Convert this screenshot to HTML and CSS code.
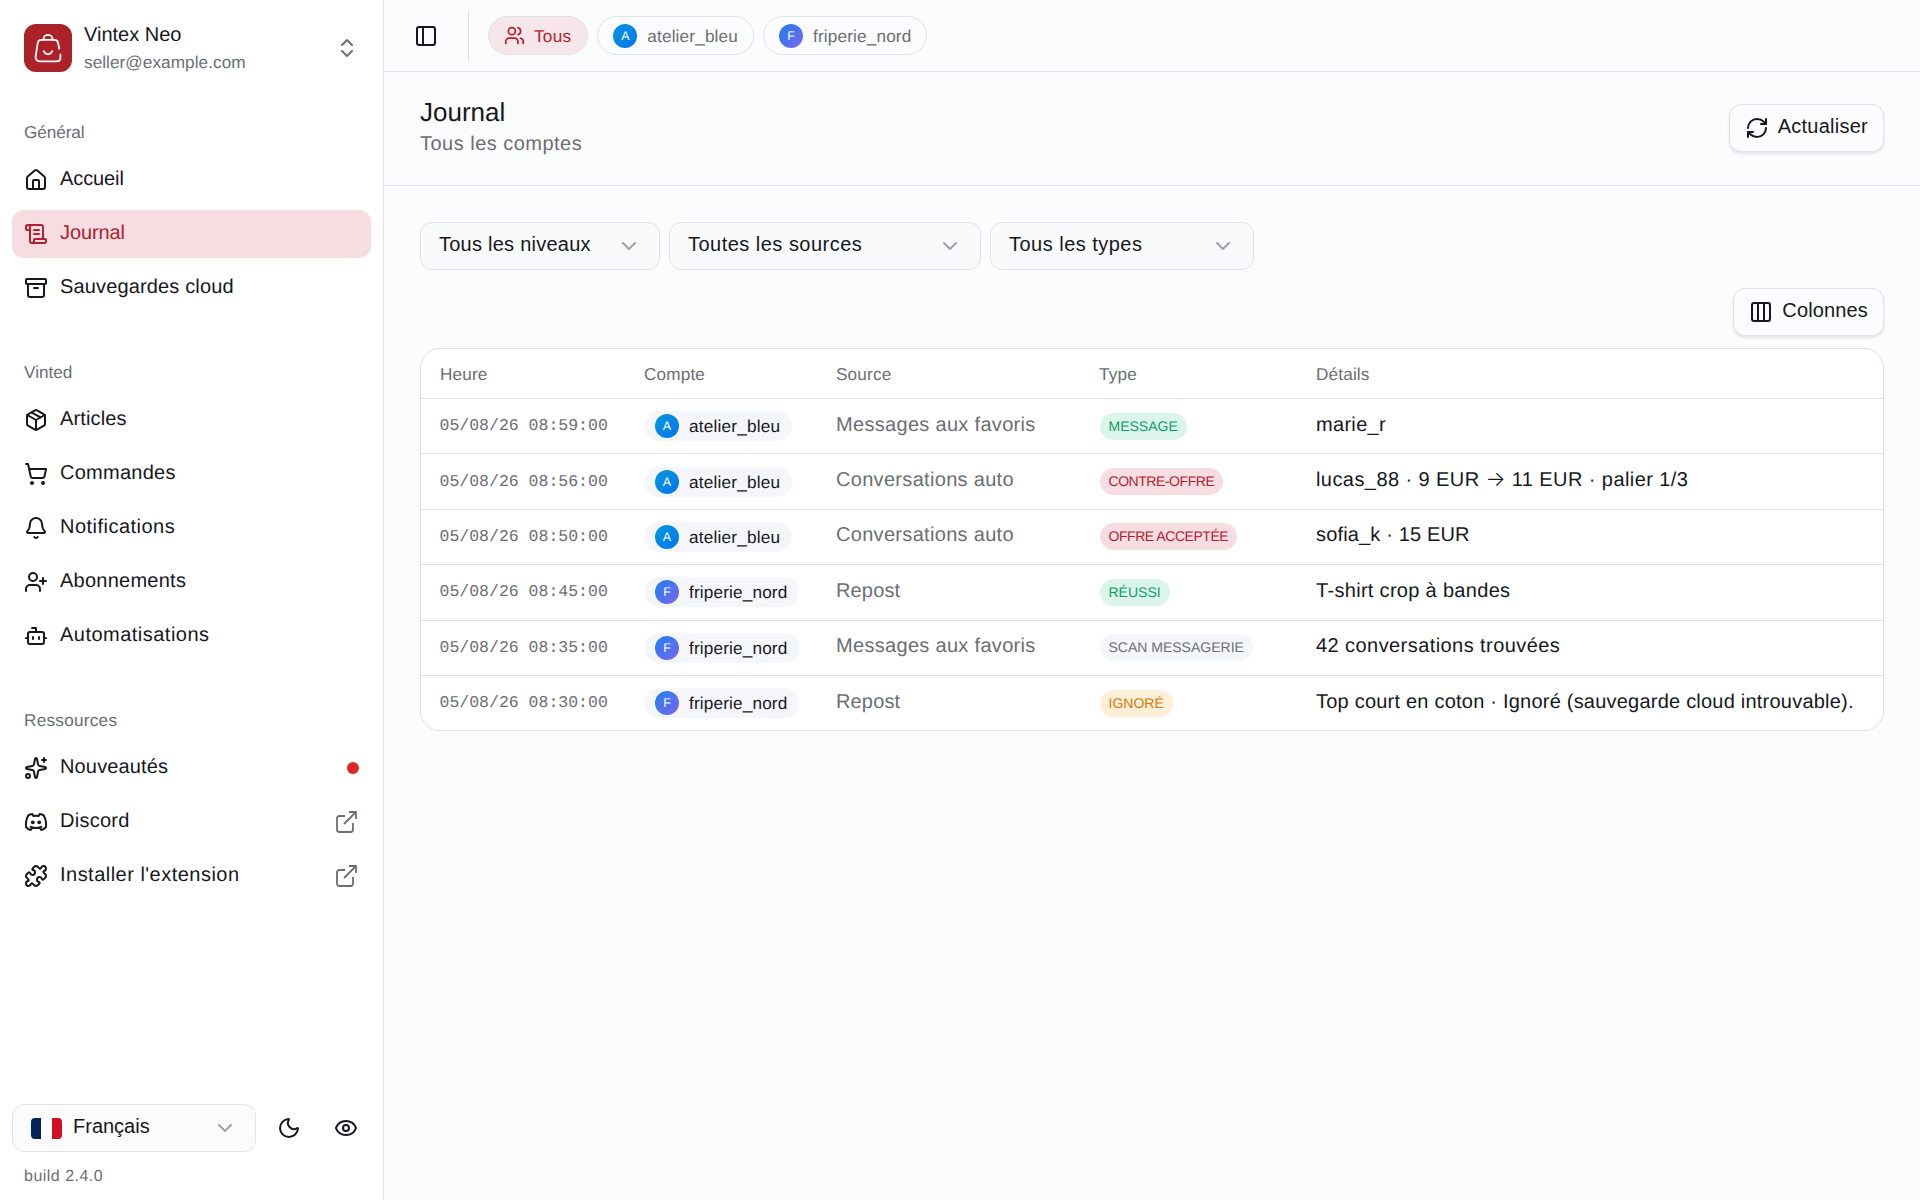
FILE: index.html
```
<!DOCTYPE html>
<html lang="fr">
<head>
<meta charset="utf-8">
<title>Journal – Vintex Neo</title>
<link rel="stylesheet" href="styles.css">
</head>
<body>
<svg class="defs" width="0" height="0" aria-hidden="true">
  <symbol id="chevron" viewBox="0 0 24 24"><path d="m6 9 6 6 6-6"/></symbol>
  <symbol id="external" viewBox="0 0 24 24"><path d="M15 2h7v7"/><path d="M10 14 21.500 2.500"/><path d="M19 13v6.500a2.500 2.500 0 0 1-2.500 2.500h-11A2.500 2.500 0 0 1 3 19.500v-11A2.500 2.500 0 0 1 5.500 6H11"/></symbol>
</svg>
<div class="app">
  <aside class="sidebar">
    <header class="account">
      <span class="logo"><svg viewBox="0 0 48 48"><path d="M19.400 15.800c0-2.900 2-5 4.600-5s4.600 2.100 4.600 5"/><path d="M35.300 24.700 34 18.800a3.500 3.500 0 0 0-3.500-3H17.300a3.500 3.500 0 0 0-3.500 2.900l-2.200 14a4 4 0 0 0 4 4.600h16.800c2.600 0 4-1.500 4-3.600v-3.200"/><path d="M19.700 27.200c1.100 2.100 2.500 3.100 4.300 3.100s3.200-1 4.300-3.100"/></svg></span>
      <span class="who"><span class="name s2">Vintex Neo</span><span class="mail s3">seller@example.com</span></span>
      <svg class="icon muted" viewBox="0 0 24 24"><path d="m7 15 5 5 5-5"/><path d="m7 9 5-5 5 5"/></svg>
    </header>
    <nav class="nav">
      <section class="group">
        <h2 class="s1">Général</h2>
        <a class="item s1"><svg class="icon" viewBox="0 0 24 24"><path d="M15 21v-8a1 1 0 0 0-1-1h-4a1 1 0 0 0-1 1v8"/><path d="M3 10a2 2 0 0 1 .709-1.528l7-5.999a2 2 0 0 1 2.582 0l7 5.999A2 2 0 0 1 21 10v9a2 2 0 0 1-2 2H5a2 2 0 0 1-2-2z"/></svg><span>Accueil</span></a>
        <a class="item active s1"><svg class="icon" viewBox="0 0 24 24"><path d="M15 12h-5"/><path d="M15 8h-5"/><path d="M19 17V5a2 2 0 0 0-2-2H4"/><path d="M8 21h12a2 2 0 0 0 2-2v-1a1 1 0 0 0-1-1H11a1 1 0 0 0-1 1v1a2 2 0 1 1-4 0V5a2 2 0 1 0-4 0v2a1 1 0 0 0 1 1h3"/></svg><span>Journal</span></a>
        <a class="item s3"><svg class="icon" viewBox="0 0 24 24"><rect width="20" height="5" x="2" y="3" rx="1"/><path d="M4 8v11a2 2 0 0 0 2 2h12a2 2 0 0 0 2-2V8"/><path d="M10 12h4"/></svg><span>Sauvegardes cloud</span></a>
      </section>
      <section class="group">
        <h2 class="s2">Vinted</h2>
        <a class="item s3"><svg class="icon" viewBox="0 0 24 24"><path d="M11 21.730a2 2 0 0 0 2 0l7-4A2 2 0 0 0 21 16V8a2 2 0 0 0-1-1.730l-7-4a2 2 0 0 0-2 0l-7 4A2 2 0 0 0 3 8v8a2 2 0 0 0 1 1.730z"/><path d="M12 22V12"/><path d="M3.290 7 12 12l8.710-5"/><path d="m7.500 4.270 9 5.150"/></svg><span>Articles</span></a>
        <a class="item s4"><svg class="icon" viewBox="0 0 24 24"><circle cx="8" cy="21" r="1"/><circle cx="19" cy="21" r="1"/><path d="M2.050 2.050h2l2.660 12.420a2 2 0 0 0 2 1.580h9.780a2 2 0 0 0 1.950-1.570l1.650-7.430H5.120"/></svg><span>Commandes</span></a>
        <a class="item s6"><svg class="icon" viewBox="0 0 24 24"><path d="M10.268 21a2 2 0 0 0 3.464 0"/><path d="M3.262 15.326A1 1 0 0 0 4 17h16a1 1 0 0 0 .74-1.673C19.410 13.956 18 12.499 18 8A6 6 0 0 0 6 8c0 4.499-1.411 5.956-2.738 7.326"/></svg><span>Notifications</span></a>
        <a class="item s4"><svg class="icon" viewBox="0 0 24 24"><path d="M16 21v-2a4 4 0 0 0-4-4H6a4 4 0 0 0-4 4v2"/><circle cx="9" cy="7" r="4"/><path d="M19 8v6"/><path d="M22 11h-6"/></svg><span>Abonnements</span></a>
        <a class="item s6"><svg class="icon" viewBox="0 0 24 24"><path d="M12 8V4H8"/><rect width="16" height="12" x="4" y="8" rx="2"/><path d="M2 14h2"/><path d="M20 14h2"/><path d="M15 13v2"/><path d="M9 13v2"/></svg><span>Automatisations</span></a>
      </section>
      <section class="group">
        <h2 class="s4">Ressources</h2>
        <a class="item s3"><svg class="icon" viewBox="0 0 24 24"><path d="M11.017 2.814a1 1 0 0 1 1.966 0l1.051 5.558a2 2 0 0 0 1.594 1.594l5.558 1.051a1 1 0 0 1 0 1.966l-5.558 1.051a2 2 0 0 0-1.594 1.594l-1.051 5.558a1 1 0 0 1-1.966 0l-1.051-5.558a2 2 0 0 0-1.594-1.594l-5.558-1.051a1 1 0 0 1 0-1.966l5.558-1.051a2 2 0 0 0 1.594-1.594z"/><path d="M20 2v4"/><path d="M22 4h-4"/><circle cx="4" cy="20" r="2"/></svg><span>Nouveautés</span><i class="dot"></i></a>
        <a class="item s4"><svg class="icon" viewBox="0 0 24 24"><path d="M8.300 4.100 9.400 6q2.600-.5 5.200 0l1.100-1.900c1.500.2 2.900.6 4 1.300 1.900 3.400 2.800 7.100 2.300 11.600a10 10 0 0 1-4.700 3.100L15.900 17.700q-3.900.8-7.800 0L6.700 20.100A10 10 0 0 1 2 17c-.5-4.500.4-8.200 2.300-11.600 1.100-.7 2.500-1.100 4-1.300z"/><path d="M6.700 16.800q5.300 2.200 10.600 0"/><circle class="fill" cx="8.800" cy="12.300" r="1.900"/><circle class="fill" cx="15.200" cy="12.300" r="1.900"/></svg><span>Discord</span><svg class="icon end" viewBox="0 0 24 24"><use href="#external"/></svg></a>
        <a class="item s6"><svg class="icon" viewBox="0 0 24 24"><path d="M15.390 4.390a1 1 0 0 0 1.680-.474 2.500 2.500 0 1 1 3.014 3.015 1 1 0 0 0-.474 1.680l1.683 1.682a2.414 2.414 0 0 1 0 3.414L19.610 15.390a1 1 0 0 1-1.680-.474 2.500 2.500 0 1 0-3.014 3.015 1 1 0 0 1 .474 1.680l-1.683 1.682a2.414 2.414 0 0 1-3.414 0L8.610 19.610a1 1 0 0 0-1.680.474 2.500 2.500 0 1 1-3.014-3.015 1 1 0 0 0 .474-1.680l-1.683-1.682a2.414 2.414 0 0 1 0-3.414L4.390 8.610a1 1 0 0 1 1.680.474 2.500 2.500 0 1 0 3.014-3.015 1 1 0 0 1-.474-1.680l1.683-1.682a2.414 2.414 0 0 1 3.414 0z"/></svg><span>Installer l'extension</span><svg class="icon end" viewBox="0 0 24 24"><use href="#external"/></svg></a>
      </section>
    </nav>
    <footer class="foot">
      <div class="tools">
        <button class="select lang s2"><i class="flag"></i><span>Français</span><svg class="icon chev" viewBox="0 0 24 24"><use href="#chevron"/></svg></button>
        <button class="tool"><svg class="icon" viewBox="0 0 24 24"><path d="M20.985 12.486a9 9 0 1 1-9.473-9.472c.405-.022.617.46.402.803a6 6 0 0 0 8.268 8.268c.344-.215.825-.004.803.401"/></svg></button>
        <button class="tool"><svg class="icon" viewBox="0 0 24 24"><path d="M2.062 12.348a1 1 0 0 1 0-.696 10.750 10.750 0 0 1 19.876 0 1 1 0 0 1 0 .696 10.750 10.750 0 0 1-19.876 0"/><circle cx="12" cy="12" r="3"/></svg></button>
      </div>
      <p class="build s6">build 2.4.0</p>
    </footer>
  </aside>

  <main class="main">
    <div class="topbar">
      <svg class="icon" viewBox="0 0 24 24"><rect width="18" height="18" x="3" y="3" rx="2"/><path d="M9 3v18"/></svg>
      <i class="sep"></i>
      <div class="pills">
        <span class="pill on s4"><svg class="icon small" viewBox="0 0 24 24"><path d="M16 21v-2a4 4 0 0 0-4-4H6a4 4 0 0 0-4 4v2"/><path d="M16 3.128a4 4 0 0 1 0 7.744"/><path d="M22 21v-2a4 4 0 0 0-3-3.870"/><circle cx="9" cy="7" r="4"/></svg>Tous</span>
        <span class="pill s3"><i class="avatar a">A</i>atelier_bleu</span>
        <span class="pill s3"><i class="avatar f">F</i>friperie_nord</span>
      </div>
    </div>
    <header class="head">
      <div><h1 class="s2">Journal</h1><p class="s6">Tous les comptes</p></div>
      <button class="btn s4"><svg class="icon" viewBox="0 0 24 24"><path d="M3 12a9 9 0 0 1 9-9 9.750 9.750 0 0 1 6.740 2.740L21 8"/><path d="M21 3v5h-5"/><path d="M21 12a9 9 0 0 1-9 9 9.750 9.750 0 0 1-6.740-2.740L3 16"/><path d="M8 16H3v5"/></svg><span>Actualiser</span></button>
    </header>
    <div class="content">
      <div class="filters">
        <button class="select levels s4"><span>Tous les niveaux</span><svg class="icon chev" viewBox="0 0 24 24"><use href="#chevron"/></svg></button>
        <button class="select sources s6"><span>Toutes les sources</span><svg class="icon chev" viewBox="0 0 24 24"><use href="#chevron"/></svg></button>
        <button class="select types s6"><span>Tous les types</span><svg class="icon chev" viewBox="0 0 24 24"><use href="#chevron"/></svg></button>
      </div>
      <div class="actions">
        <button class="btn s3"><svg class="icon" viewBox="0 0 24 24"><rect width="18" height="18" x="3" y="3" rx="2"/><path d="M9 3v18"/><path d="M15 3v18"/></svg><span>Colonnes</span></button>
      </div>
      <div class="table">
        <div class="row th s3"><span>Heure</span><span>Compte</span><span>Source</span><span>Type</span><span>Détails</span></div>
        <div class="row"><time>05/08/26 08:59:00</time><span><span class="chip s4"><i class="avatar a">A</i>atelier_bleu</span></span><span class="src">Messages aux favoris</span><span><b class="badge green">MESSAGE</b></span><span class="det">marie_r</span></div>
        <div class="row"><time>05/08/26 08:56:00</time><span><span class="chip s4"><i class="avatar a">A</i>atelier_bleu</span></span><span class="src">Conversations auto</span><span><b class="badge red">CONTRE-OFFRE</b></span><span class="det s6">lucas_88 · 9 EUR <span class="arrow">→</span> 11 EUR · palier 1/3</span></div>
        <div class="row"><time>05/08/26 08:50:00</time><span><span class="chip s4"><i class="avatar a">A</i>atelier_bleu</span></span><span class="src">Conversations auto</span><span><b class="badge red">OFFRE ACCEPTÉE</b></span><span class="det s3">sofia_k · 15 EUR</span></div>
        <div class="row"><time>05/08/26 08:45:00</time><span><span class="chip s3"><i class="avatar f">F</i>friperie_nord</span></span><span class="src s3">Repost</span><span><b class="badge green">RÉUSSI</b></span><span class="det">T-shirt crop à bandes</span></div>
        <div class="row"><time>05/08/26 08:35:00</time><span><span class="chip s3"><i class="avatar f">F</i>friperie_nord</span></span><span class="src">Messages aux favoris</span><span><b class="badge gray">SCAN MESSAGERIE</b></span><span class="det s6">42 conversations trouvées</span></div>
        <div class="row"><time>05/08/26 08:30:00</time><span><span class="chip s3"><i class="avatar f">F</i>friperie_nord</span></span><span class="src s3">Repost</span><span><b class="badge amber">IGNORÉ</b></span><span class="det s4">Top court en coton · Ignoré (sauvegarde cloud introuvable).</span></div>
      </div>
    </div>
  </main>
</div>
</body>
</html>
```
FILE: styles.css
```
* { box-sizing: border-box; margin: 0; padding: 0; }
body {
  font: 20px/24px "Liberation Sans", Arial, sans-serif;
  color: #16181d;
  background: #fbfcfe;
  text-rendering: geometricPrecision;
}
button { font: inherit; color: inherit; letter-spacing: inherit; border: 0; background: none; }
h1, h2, b, i { font-weight: 400; font-style: normal; }
.defs { position: absolute; }

/* Tracking steps */
.s1 { letter-spacing: -.1px; }
.s2 { letter-spacing: 0; }
.s3 { letter-spacing: .15px; }
.s4 { letter-spacing: .25px; }
.s6 { letter-spacing: .48px; }

.icon { width: 24px; height: 24px; flex: none; fill: none; stroke: currentColor; stroke-width: 2; stroke-linecap: round; stroke-linejoin: round; }
.icon .fill { fill: currentColor; stroke: none; }
.muted { color: #6b6e73; }

.app { display: flex; height: 1200px; }
.sidebar { width: 384px; flex: none; display: flex; flex-direction: column; background: #fff; border-right: 1px solid #e0e2e5; }

.account { display: flex; align-items: center; height: 96px; padding: 0 24px; }
.logo { width: 48px; height: 48px; border-radius: 12px; background: #ad2129; }
.logo svg { display: block; fill: none; stroke: #fff; stroke-width: 1.8; stroke-linecap: round; }
.who { flex: 1; padding-left: 12px; display: flex; flex-direction: column; padding-top: 1px; }
.name { line-height: 28px; }
.mail { font-size: 17.2px; line-height: 27px; letter-spacing: .05px; color: #6b6e73; }

.nav { flex: 1; padding: 12px; display: flex; flex-direction: column; gap: 36px; }
.group { display: flex; flex-direction: column; gap: 6px; }
.group h2 { font-size: 17.2px; height: 42px; line-height: 49px; padding-left: 12px; color: #6b6e73; }
.item { display: flex; align-items: center; gap: 12px; height: 48px; padding: 0 12px; border-radius: 12px; }
.item span { padding-bottom: 2px; flex: 1; }
.active { background: #f5dde1; color: #b3202f; }
.dot { width: 12px; height: 12px; border-radius: 50%; background: #e02424; }
.end { color: #6b6e73; stroke-width: 1.8; stroke-linecap: butt; margin-right: 1px; }

.foot { padding: 0 12px; height: 96px; }
.tools { display: flex; align-items: center; }
.select { display: flex; align-items: center; height: 48px; padding: 0 18px; border: 1px solid #e0e2e5; border-radius: 12px; background: #f9fafb; text-align: left; }
.select span { flex: 1; padding-bottom: 4px; }
.chev { color: #a0a2a5; }
.lang { width: 244px; background: #fbfbfb; gap: 11px; }
.flag { width: 31px; height: 21px; border-radius: 4px; background: linear-gradient(90deg, #00265a 0 33.300%, #fff 33.300% 66.600%, #cf1126 66.600%); }
.tool { width: 48px; height: 48px; display: grid; place-items: center; margin-left: 9px; }
.build { font-size: 16px; padding: 13px 12px 0; color: #6b6e73; }

.main { flex: 1; min-width: 0; }
.topbar { display: flex; align-items: center; height: 72px; padding-left: 30px; border-bottom: 1px solid #e0e2e5; }
.sep { width: 1px; height: 52px; margin: 0 19px 0 30px; background: #e0e2e5; }
.pills { display: flex; gap: 9px; }
.pill { display: flex; align-items: center; height: 39px; padding: 0 15px; border: 1px solid #e0e2e5; border-radius: 20px; font-size: 17.2px; color: #6b6e73; }
.on { background: #f7e6e9; color: #b3202f; padding-right: 16px; }
.small { width: 21px; height: 21px; margin-right: 9px; }
.avatar { width: 24px; height: 24px; border-radius: 50%; margin-right: 10px; display: inline-grid; place-items: center; flex: none; font-size: 12.500px; letter-spacing: 0; color: #fff; }
.a { background: linear-gradient(135deg, #0599dc, #0474ee); }
.f { background: linear-gradient(135deg, #1f7fee, #7b66ee); }

.head { display: flex; align-items: center; justify-content: space-between; height: 114px; padding: 0 36px 2px; border-bottom: 1px solid #e0e2e5; }
.head h1 { font-size: 26px; line-height: 32px; padding-bottom: 2px; }
.head p { color: #6b6e73; line-height: 28px; padding-bottom: 2px; }
.btn { display: flex; align-items: center; gap: 9px; height: 48px; padding: 0 15px; border: 1px solid #e0e2e5; border-radius: 12px; background: #fbfcfe; box-shadow: 0 2px 3px rgba(0, 0, 0, .1); }
.btn span { padding-bottom: 4px; }

.content { padding: 36px 36px 0; }
.filters { display: flex; gap: 9px; }
.levels { width: 240px; }
.sources { width: 312px; }
.types { width: 264px; }
.actions { display: flex; justify-content: flex-end; margin: 18px 0 12px; }

.table { border: 1px solid #e0e2e5; border-radius: 20px; background: #fff; overflow: hidden; }
.row { display: grid; grid-template-columns: 204px 192px 263px 217px 1fr; align-items: center; height: 55.400px; padding-left: 19px; border-top: 1px solid #e0e2e5; letter-spacing: .31px; white-space: nowrap; }
.row > span { display: flex; }
.row.th { height: 49px; border: 0; padding-top: 1px; font-size: 17.2px; letter-spacing: .15px; color: #6b6e73; }
time { font: 16.500px/24px "Liberation Mono", monospace; letter-spacing: 0; color: #6b6e73; margin-left: -.5px; }
.src { color: #6b6e73; }
.src, .det { padding-bottom: 3px; }
.row > .s3 { letter-spacing: .15px; }
.row > .s4 { letter-spacing: .22px; }
.row > .s6 { letter-spacing: .43px; }
.det { white-space: pre; }
.arrow { font: 300 21px/24px Inter, sans-serif; letter-spacing: 0; }
.chip { display: inline-flex; align-items: center; height: 30px; padding: 0 12px 0 11px; border-radius: 15px; background: #f4f6fa; font-size: 17.2px; }
.chip.s3 { letter-spacing: .15px; }
.chip.s4 { letter-spacing: .2px; }
.badge { display: inline-block; height: 27px; line-height: 27px; padding: 0 9px; margin-left: .5px; border-radius: 14px; font-size: 14px; letter-spacing: 0; }
.green { background: #dcf5eb; color: #0d9c68; }
.red { background: #f5dde1; color: #b3202f; letter-spacing: -.45px; }
.gray { background: #f4f6fa; color: #6b6e73; }
.amber { background: #feefd9; color: #d67806; }
```
